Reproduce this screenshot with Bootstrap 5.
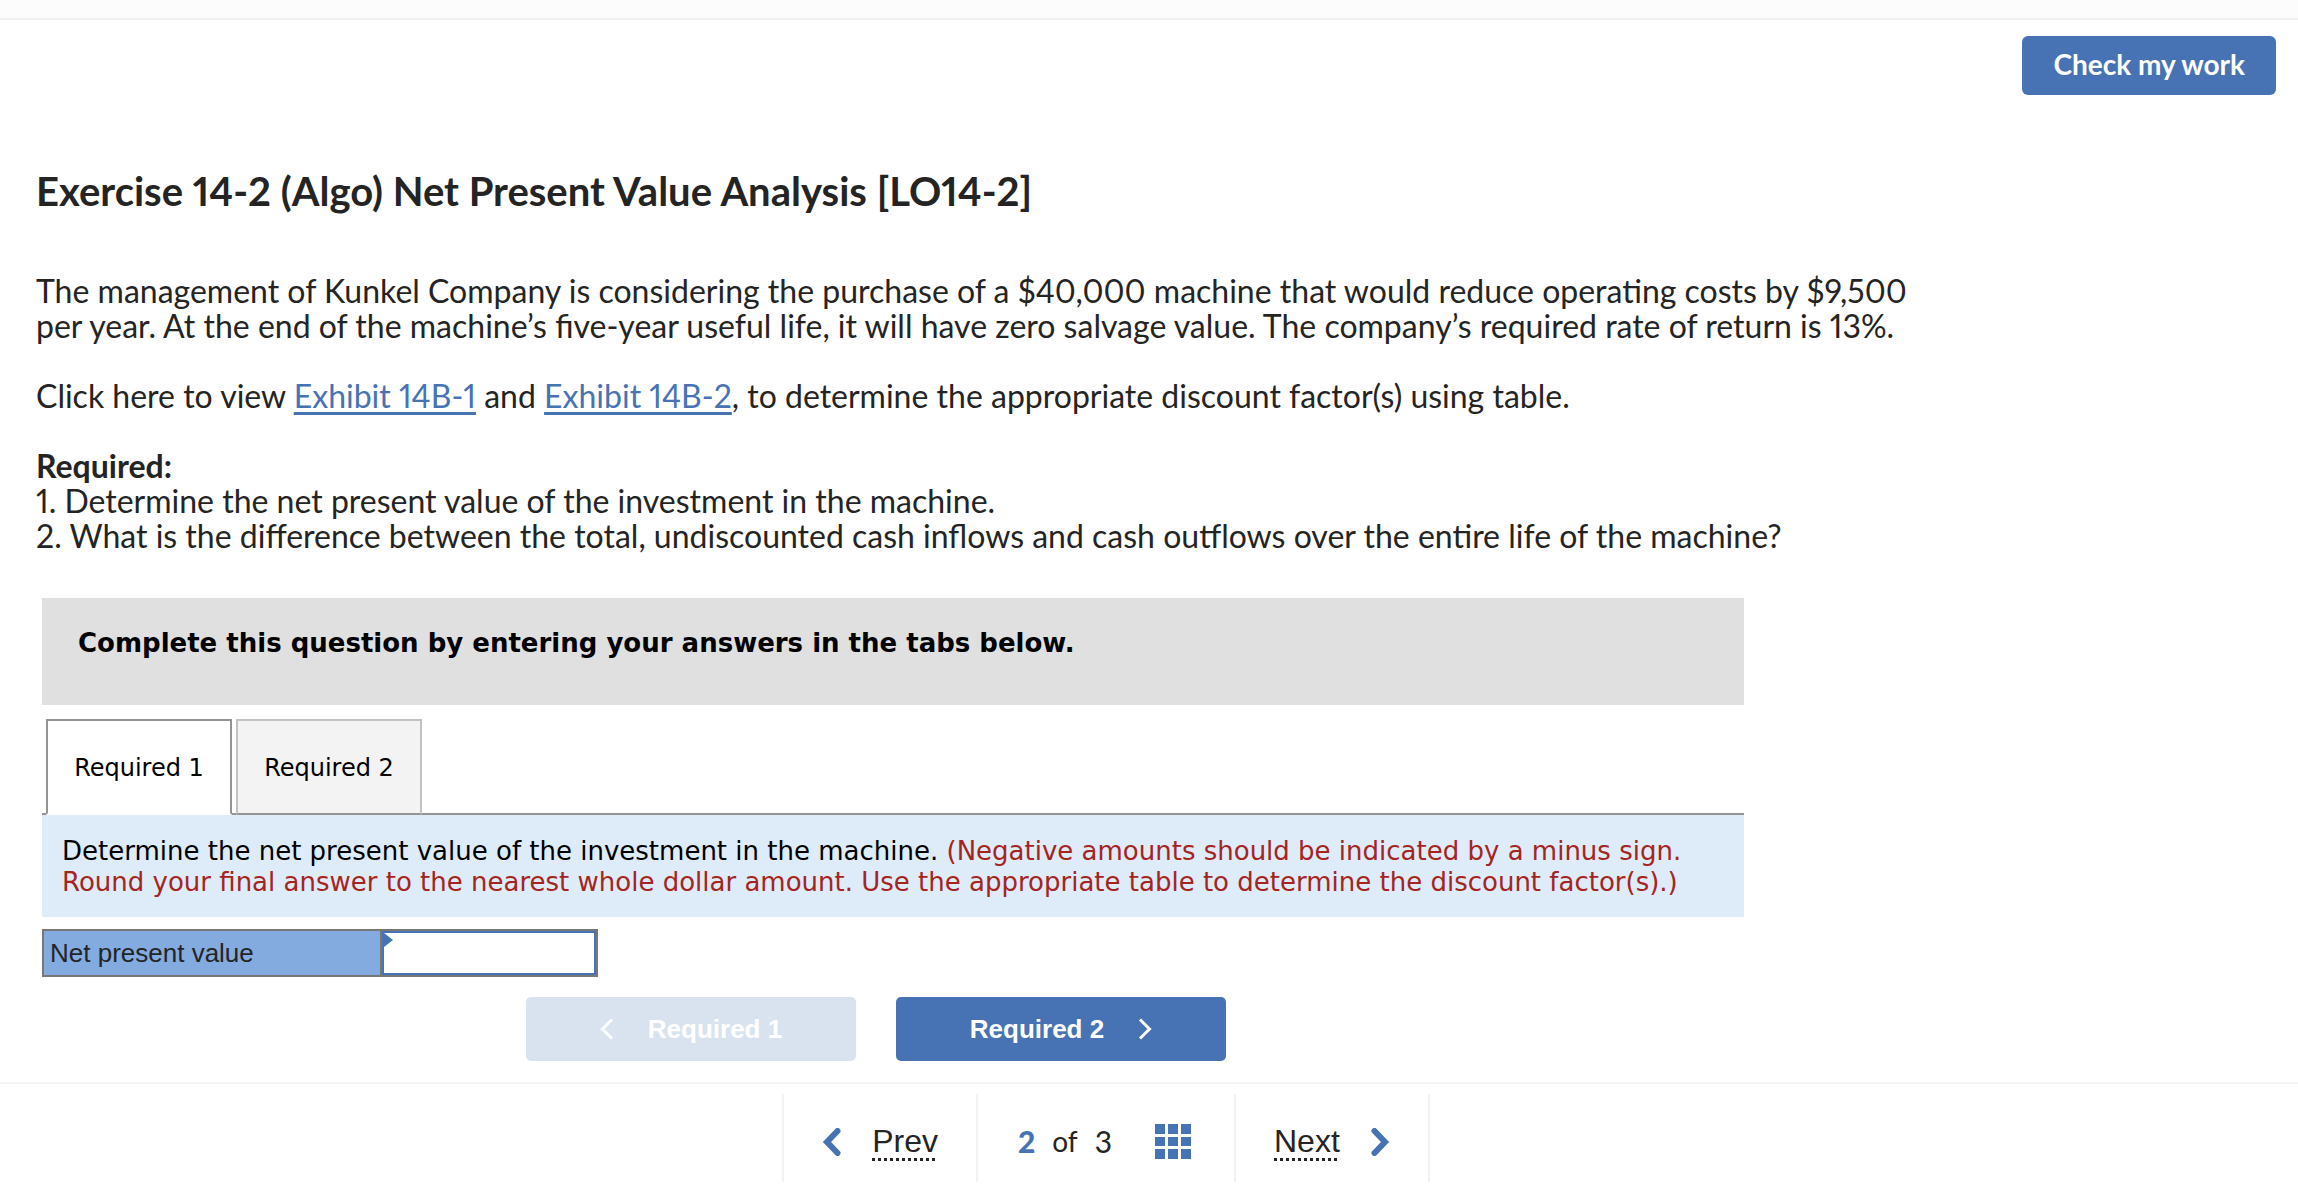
<!DOCTYPE html>
<html lang="en">
<head>
<meta charset="utf-8">
<meta name="viewport" content="width=device-width, initial-scale=1">
<title>Exercise 14-2 (Algo) Net Present Value Analysis</title>
<link href="https://cdn.jsdelivr.net/npm/bootstrap@5.3.0/dist/css/bootstrap.min.css" rel="stylesheet">
<style>
  :root { --brand: #4773b4; --ink: #242424; --rule: #f2f2f2; }
  body { font-family: Lato, sans-serif; font-size: 32px; line-height: 35px; color: var(--ink); background: #fff; font-variant-numeric: proportional-nums; }
  .top-strip { height: 20px; background: #fcfcfc; border-bottom: 2px solid #efefef; }
  .btn-brand { --bs-btn-color: #fff; --bs-btn-bg: var(--brand); --bs-btn-border-color: var(--brand);
    --bs-btn-hover-color: #fff; --bs-btn-hover-bg: #3b639e; --bs-btn-hover-border-color: #3b639e;
    --bs-btn-disabled-color: #fff; --bs-btn-disabled-bg: #d9e3f0; --bs-btn-disabled-border-color: #d9e3f0;
    --bs-btn-disabled-opacity: 1; --bs-btn-font-weight: 700; --bs-btn-border-width: 0; }
  .btn-check-work { --bs-btn-padding-x: 31px; --bs-btn-padding-y: 0; --bs-btn-font-size: 28px; --bs-btn-border-radius: 6px;
    height: 59px; padding-bottom: 4px; }
  .action-bar { padding: 16px 22px 0; }
  .question { padding: 72px 36px 0; max-width: 1982px; }
  .question h1 { font-size: 40px; line-height: 48px; font-weight: 700; margin: 0 0 58px; }
  .question p { margin: 0 0 35px; }
  .question a { color: var(--brand); text-decoration-thickness: 3px; text-underline-offset: 4px; }
  .worksheet { margin: 45px 42px 0; max-width: 1702px; font-family: "DejaVu Sans", Verdana, sans-serif; color: #000; }
  .worksheet-banner { background: #e0e0e0; padding: 30px 36px 46px; font-size: 26px; line-height: 31px; font-weight: 700; }
  .req-tabs { --bs-nav-tabs-border-width: 2px; --bs-nav-tabs-border-color: #949494; --bs-nav-tabs-border-radius: 0;
    --bs-nav-tabs-link-active-color: #000; --bs-nav-tabs-link-active-border-color: #949494 #949494 #fff;
    --bs-nav-link-color: #000; --bs-nav-link-hover-color: #000;
    margin-top: 14px; padding-left: 4px; gap: 4px; }
  .req-tabs .nav-link { width: 186px; padding: 34px 0 32px; font-size: 24px; line-height: 26px; }
  .req-tabs .nav-link:not(.active) { background: #f3f3f3; border-color: #c2c2c2 #c2c2c2 #949494; }
  .instructions { background: #deebf8; padding: 21px 20px 19px; font-size: 26px; line-height: 31px; }
  .instructions span { color: #a52420; }
  .answer-table { margin: 12px 0 0; width: 556px; border-collapse: collapse; table-layout: fixed; font: 26px/30px "Liberation Sans", Arial, sans-serif; }
  .answer-table th, .answer-table td { border: 2px solid #777; height: 46px; padding: 0; }
  .answer-table th { width: 338px; background: #83abe0; color: #242424; font-weight: 400; padding-left: 6px; }
  .answer-cell { position: relative; }
  .answer-cell input { display: block; width: 100%; height: 44px; border: 2px solid var(--brand); border-radius: 0; padding: 0 10px; outline: 0; }
  .answer-flag { position: absolute; left: 2px; top: 2px; width: 9px; height: 14px; background: var(--brand); clip-path: polygon(0 0, 100% 50%, 0 100%); }
  .step-buttons { margin-top: 20px; gap: 40px; padding-right: 34px; }
  .step-buttons .btn { width: 330px; height: 64px; gap: 34px; --bs-btn-font-size: 26px; --bs-btn-border-radius: 5px; --bs-btn-padding-y: 0; --bs-btn-font-family: "Liberation Sans", Arial, sans-serif; }
  .pager { margin-top: 21px; padding: 10px 86px 10px 0; border-top: 2px solid var(--rule); }
  .pager-cell { height: 88px; border-left: 2px solid var(--rule); padding: 7px 38px 0; }
  .pager-cell:last-child { border-right: 2px solid var(--rule); }
  .pager-link { color: var(--ink); text-decoration: none; gap: 30px; font-family: "Liberation Sans", Arial, sans-serif; }
  .pager-link span { line-height: 37px; padding-bottom: 1px;
    background: repeating-linear-gradient(90deg, var(--ink) 0 3px, transparent 3px 6px) left bottom / 63px 3px no-repeat; }
  .pager-count { font-size: 30px; gap: 17px; padding-left: 40px; padding-right: 43px; }
  .pager-count strong { color: var(--brand); font-weight: 900; }
  .pager-count small { font-size: 28px; }
  .grid-btn { margin-left: 26px; color: var(--brand); line-height: 0; }
</style>
<script src="https://cdn.jsdelivr.net/npm/bootstrap@5.3.0/dist/js/bootstrap.bundle.min.js"></script>
</head>
<body>
<div class="top-strip"></div>
<div class="action-bar d-flex justify-content-end">
  <button type="button" class="btn btn-brand btn-check-work">Check my work</button>
</div>
<main>
  <section class="question">
    <h1>Exercise 14-2 (Algo) Net Present Value Analysis [LO14-2]</h1>
    <p>The management of Kunkel Company is considering the purchase of a $40,000 machine that would reduce operating costs by $9,500 per year. At the end of the machine’s five-year useful life, it will have zero salvage value. The company’s required rate of return is 13%.</p>
    <p>Click here to view <a href="#">Exhibit 14B-1</a> and <a href="#">Exhibit 14B-2</a>, to determine the appropriate discount factor(s) using table.</p>
    <div><strong>Required:</strong></div>
    <div>1. Determine the net present value of the investment in the machine.</div>
    <div>2. What is the difference between the total, undiscounted cash inflows and cash outflows over the entire life of the machine?</div>
  </section>

  <section class="worksheet">
    <div class="worksheet-banner">Complete this question by entering your answers in the tabs below.</div>
    <ul class="nav nav-tabs req-tabs" role="tablist">
      <li class="nav-item" role="presentation"><button type="button" class="nav-link active" role="tab" aria-selected="true">Required 1</button></li>
      <li class="nav-item" role="presentation"><button type="button" class="nav-link" role="tab" aria-selected="false">Required 2</button></li>
    </ul>
    <div class="instructions">Determine the net present value of the investment in the machine. <span>(Negative amounts should be indicated by a minus sign. Round your final answer to the nearest whole dollar amount. Use the appropriate table to determine the discount factor(s).)</span></div>
    <table class="answer-table">
      <tr>
        <th scope="row"><label for="npv">Net present value</label></th>
        <td class="answer-cell"><input type="text" id="npv"><i class="answer-flag"></i></td>
      </tr>
    </table>
    <div class="step-buttons d-flex justify-content-center">
      <button type="button" class="btn btn-brand d-flex align-items-center justify-content-center" disabled>
        <svg width="14" height="22" viewBox="0 0 14 22" fill="none" stroke="currentColor" stroke-width="3" aria-hidden="true"><path d="M12 1.500 2.500 11 12 20.500"/></svg>
        Required 1
      </button>
      <button type="button" class="btn btn-brand d-flex align-items-center justify-content-center">
        Required 2
        <svg width="14" height="22" viewBox="0 0 14 22" fill="none" stroke="currentColor" stroke-width="3" aria-hidden="true"><path d="M2 1.500 11.500 11 2 20.500"/></svg>
      </button>
    </div>
  </section>
</main>
<nav class="pager d-flex justify-content-center" aria-label="Question navigation">
  <div class="pager-cell d-flex align-items-center">
    <a href="#" class="pager-link d-flex align-items-center">
      <svg width="20" height="28" viewBox="0 0 20 28" fill="none" stroke="#4773b4" stroke-width="6" stroke-linecap="round" stroke-linejoin="miter" aria-hidden="true"><path d="M15.500 3 5 14 15.500 25"/></svg>
      <span>Prev</span>
    </a>
  </div>
  <div class="pager-cell pager-count d-flex align-items-center">
    <strong>2</strong><small>of</small><div>3</div>
    <button type="button" class="btn border-0 p-0 grid-btn" aria-label="Question list">
      <svg width="36" height="35" viewBox="0 0 36 35" fill="currentColor" aria-hidden="true"><path d="M0 0h10v10H0zM13 0h10v10H13zM26 0h10v10H26zM0 13h10v9H0zM13 13h10v9H13zM26 13h10v9H26zM0 25h10v10H0zM13 25h10v10H13zM26 25h10v10H26z"/></svg>
    </button>
  </div>
  <div class="pager-cell d-flex align-items-center">
    <a href="#" class="pager-link d-flex align-items-center">
      <span>Next</span>
      <svg width="20" height="28" viewBox="0 0 20 28" fill="none" stroke="#4773b4" stroke-width="6" stroke-linecap="round" stroke-linejoin="miter" aria-hidden="true"><path d="M4.500 3 15 14 4.500 25"/></svg>
    </a>
  </div>
</nav>
</body>
</html>
